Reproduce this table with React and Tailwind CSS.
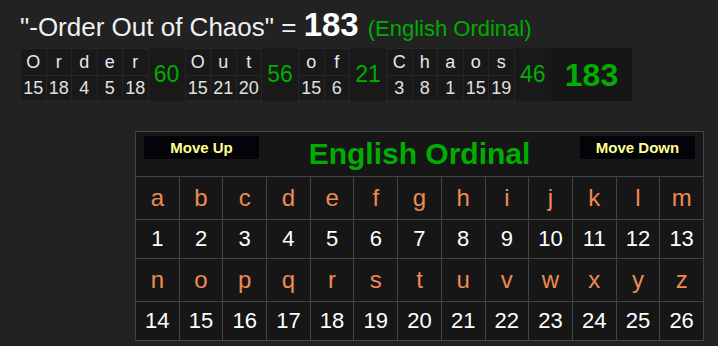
import React from "react";

const words = [
  { letters: ["O", "r", "d", "e", "r"], values: [15, 18, 4, 5, 18], sum: 60 },
  { letters: ["O", "u", "t"], values: [15, 21, 20], sum: 56 },
  { letters: ["o", "f"], values: [15, 6], sum: 21 },
  { letters: ["C", "h", "a", "o", "s"], values: [3, 8, 1, 15, 19], sum: 46 },
];

const alphabet = "abcdefghijklmnopqrstuvwxyz".split("");

function Breakdown() {
  return (
    <table className="border-collapse bg-[#191919] mt-[10px]">
      <tbody>
        <tr className="h-[27px]">
          {words.map((w, wi) => (
            <React.Fragment key={wi}>
              {w.letters.map((l, i) => (
                <td
                  key={i}
                  className="w-[25.5px] min-w-[25.5px] border border-[#262626] p-0 text-center text-[18px] leading-none text-[#e4e8f0]"
                >
                  {l}
                </td>
              ))}
              <td
                rowSpan={2}
                className="w-[37px] min-w-[37px] p-0 text-center text-[23px] leading-none text-[#00ad00]"
              >
                {w.sum}
              </td>
            </React.Fragment>
          ))}
          <td
            rowSpan={2}
            className="w-[81px] min-w-[81px] bg-[#161616] p-0 text-center text-[32px] font-bold leading-none text-[#00ad00]"
          >
            183
          </td>
        </tr>
        <tr className="h-[25px]">
          {words.map((w, wi) => (
            <React.Fragment key={wi}>
              {w.values.map((v, i) => (
                <td
                  key={i}
                  className="border border-[#262626] p-0 text-center text-[18px] leading-none text-[#e0e0e0]"
                >
                  {v}
                </td>
              ))}
            </React.Fragment>
          ))}
        </tr>
      </tbody>
    </table>
  );
}

function CipherChart() {
  const rows = [alphabet.slice(0, 13), alphabet.slice(13)];
  return (
    <table className="table-fixed border-collapse w-[569px] bg-[#161616]">
      <tbody>
        <tr className="h-[45px]">
          <td colSpan={13} className="border border-[#444] p-0">
            <div className="flex items-start justify-between px-[8px] h-[44px]">
              <button className="mt-[4px] w-[115px] h-[23px] bg-[#03030a] text-[15px] font-bold leading-none text-[#ffff8a]">
                Move Up
              </button>
              <div className="mt-[4px] text-[30px] font-bold leading-none text-[#00ad00] pt-[3px]">
                English Ordinal
              </div>
              <button className="mt-[4px] w-[115px] h-[23px] bg-[#03030a] text-[15px] font-bold leading-none text-[#ffff8a]">
                Move Down
              </button>
            </div>
          </td>
        </tr>
        {rows.map((row, ri) => (
          <React.Fragment key={ri}>
            <tr className="h-[43px]">
              {row.map((l) => (
                <td
                  key={l}
                  className="border border-[#444] p-0 text-center text-[24px] leading-none text-[#ef8a52]"
                >
                  {l}
                </td>
              ))}
            </tr>
            <tr className="h-[39px]">
              {row.map((l) => (
                <td
                  key={l}
                  className="border border-[#444] p-0 text-center text-[22px] leading-none text-white"
                >
                  {alphabet.indexOf(l) + 1}
                </td>
              ))}
            </tr>
          </React.Fragment>
        ))}
      </tbody>
    </table>
  );
}

export default function App() {
  return (
    <div className="w-[718px] h-[346px] overflow-hidden bg-[#222222] font-['Liberation_Sans',Arial,sans-serif]">
      <div className="pl-[20px] pt-[8px]">
        <div className="flex items-baseline h-[30px] whitespace-nowrap">
          <span className="text-[26px] leading-none text-[#f0f0f0]">
            "-Order Out of Chaos" =&nbsp;
          </span>
          <span className="text-[33px] font-bold leading-none text-white">183</span>
          <span className="ml-[9px] text-[22px] leading-none text-[#00ad00]">
            (English Ordinal)
          </span>
        </div>
        <Breakdown />
      </div>
      <div className="pl-[135px] pt-[30px]">
        <CipherChart />
      </div>
    </div>
  );
}
